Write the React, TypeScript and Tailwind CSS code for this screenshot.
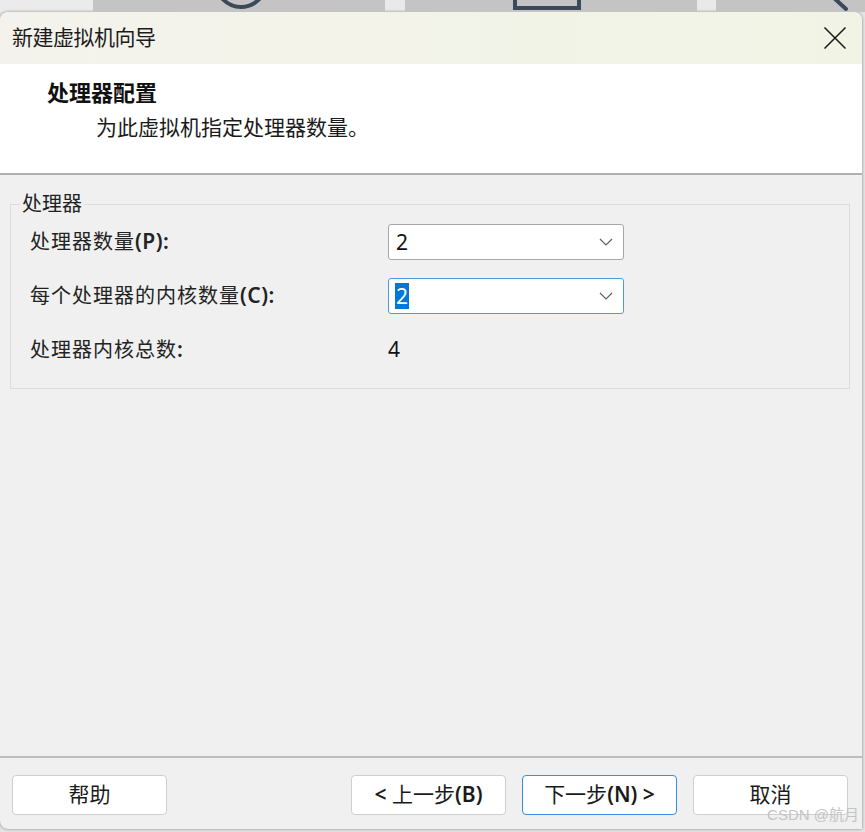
import { X } from 'lucide-react'

function Chevron() {
  return (
    <svg width="14" height="8" viewBox="0 0 14 8" className="text-[#606060]">
      <polyline points="1,1 7,7 13,1" fill="none" stroke="currentColor" strokeWidth="1.2" />
    </svg>
  )
}

function ComboBox({ value, focused }: { value: string; focused?: boolean }) {
  return (
    <div
      className={`flex items-center justify-between w-[236px] h-[36px] bg-white rounded-[3px] pl-[6px] pr-[10px] border ${
        focused ? 'border-[#4b9be3]' : 'border-[#a6a6a6]'
      }`}
    >
      {focused ? (
        <span className="bg-[#0078d7] text-white text-[21px] leading-[26px] px-[1px]">{value}</span>
      ) : (
        <span className="text-[#111] text-[21px] leading-[26px] px-[1px]">{value}</span>
      )}
      <Chevron />
    </div>
  )
}

function Button({ pre, label, key2, post, primary }: { pre?: string; label: string; key2?: string; post?: string; primary?: boolean }) {
  return (
    <button
      className={`w-[155px] h-[40px] bg-white rounded-[4px] border text-[21px] text-[#1a1a1a] ${
        primary ? 'border-[#3a8ee0]' : 'border-[#cfcfcf]'
      }`}
    >
      {pre && <span className="font-semibold">{pre} </span>}
      {label}
      {key2 && <span className="font-semibold">{key2}</span>}
      {post && <span className="font-semibold"> {post}</span>}
    </button>
  )
}

const rows = [
  { label: '处理器数量', suffix: '(P):', kind: 'combo', value: '2' },
  { label: '每个处理器的内核数量', suffix: '(C):', kind: 'focus', value: '2' },
  { label: '处理器内核总数', suffix: ':', kind: 'text', value: '4' },
]

export default function App() {
  return (
    <div className="relative w-[865px] h-[832px] bg-[#e4e4e4] flex flex-col overflow-hidden font-['Noto_Sans','Noto_Sans_CJK_SC',sans-serif]">
      {/* toolbar behind the dialog */}
      <div className="h-[12px] flex shrink-0">
        <div className="w-[93px] bg-[#ebebeb]" />
        <div className="relative w-[292px] bg-[#c4c4c4]">
          <svg className="absolute left-[118px] top-[-48px]" width="60" height="60" viewBox="0 0 60 60">
            <circle cx="30" cy="30" r="25" fill="none" stroke="#3b4a58" strokeWidth="4" />
          </svg>
        </div>
        <div className="w-[20px] bg-[#e9e9e9]" />
        <div className="relative w-[292px] bg-[#c4c4c4]">
          <svg className="absolute left-[108px] top-[-20px]" width="70" height="30" viewBox="0 0 70 30">
            <rect x="2" y="2" width="64" height="26" fill="none" stroke="#3b4a58" strokeWidth="4" />
          </svg>
        </div>
        <div className="w-[19px] bg-[#e9e9e9]" />
        <div className="relative flex-1 bg-[#c4c4c4]">
          <svg className="absolute left-[116px] top-0" width="20" height="12" viewBox="0 0 20 12">
            <line x1="2" y1="-2" x2="14" y2="9" stroke="#3b4a58" strokeWidth="4" strokeLinecap="round" />
          </svg>
        </div>
      </div>

      {/* dialog */}
      <div className="flex-1 mr-[3px] mb-[3px] flex flex-col rounded-t-[8px] rounded-bl-[8px] overflow-hidden bg-[#f0f0f0] shadow-[0_0_3px_rgba(0,0,0,0.45)]">
        <div className="h-[52px] shrink-0 flex items-center justify-between pl-[12px] pr-[7px] bg-gradient-to-r from-[#f4f2ec] to-[#f1f4e5]">
          <span className="text-[21px] text-[#1b1b1b] tracking-[-0.5px]">新建虚拟机向导</span>
          <X className="w-[40px] h-[40px] text-[#1b1b1b]" strokeWidth={1} />
        </div>

        <div className="h-[109px] shrink-0 bg-white pl-[47px] pt-[16px] font-['Liberation_Serif','Noto_Sans_CJK_SC',serif]">
          <div className="text-[22px] leading-[28px] font-bold text-[#111]">处理器配置</div>
          <div className="pl-[49px] mt-[6px] text-[21px] leading-[28px] text-[#1a1a1a]">为此虚拟机指定处理器数量。</div>
        </div>
        <div className="h-[2px] shrink-0 bg-[#b0b0b0]" />

        <div className="flex-1 pl-[10px] pr-[12px] pt-[17px]">
          <fieldset className="border border-[#dcdcdc] pl-[19px] pb-[20px]">
            <legend className="ml-[-10px] px-[2px] text-[20px] leading-[24px] text-[#222]">处理器</legend>
            <div className="flex flex-col gap-[18px] pt-[8px]">
              {rows.map((r) => (
                <div key={r.label} className="flex items-center h-[36px]">
                  <span className="w-[358px] text-[20px] text-[#222]">
                    <span className="tracking-[1px]">{r.label}</span>
                    <span className="font-semibold text-[21px] tracking-[0.5px]">{r.suffix}</span>
                  </span>
                  {r.kind === 'text' ? (
                    <span className="text-[21px] text-[#111]">{r.value}</span>
                  ) : (
                    <ComboBox value={r.value} focused={r.kind === 'focus'} />
                  )}
                </div>
              ))}
            </div>
          </fieldset>
        </div>

        <div className="h-[2px] shrink-0 bg-[#bdbdbd]" />
        <div className="h-[71px] shrink-0 flex items-start pt-[17px] pl-[12px] pr-[14px]">
          <Button label="帮助" />
          <div className="flex-1" />
          <div className="flex gap-[16px]">
            <Button pre="<" label="上一步" key2="(B)" />
            <Button label="下一步" key2="(N)" post=">" primary />
            <Button label="取消" />
          </div>
        </div>
      </div>

      <span className="absolute right-[6px] bottom-[6px] text-[15px] text-[#c4c4c4] font-['Liberation_Sans','Noto_Sans_CJK_SC',sans-serif]">
        CSDN @航月
      </span>
    </div>
  )
}
